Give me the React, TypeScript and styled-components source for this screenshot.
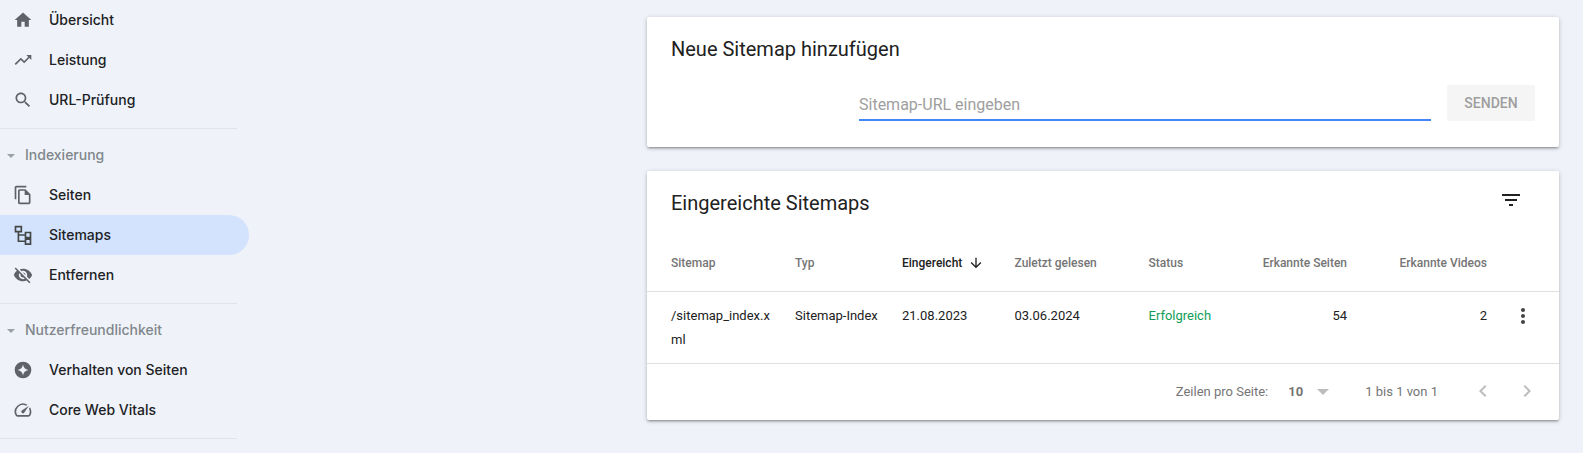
import React from "react";
import styled, { createGlobalStyle } from "styled-components";

const Global = createGlobalStyle`
  html, body { margin: 0; padding: 0; background: #eff3f9; overflow: hidden; }
  body { font-family: Roboto, "Liberation Sans", sans-serif; }
  * { box-sizing: border-box; }
`;
const Page = styled.div`
  display: flex;
  width: 1583px;
  height: 453px;
  overflow: hidden;
  background: #eff3f9;
`;
const Sidebar = styled.nav`
  flex: 0 0 647px;
  display: flex;
  flex-direction: column;
  padding-right: 398px;
`;
const NavItem = styled.div<{ $active?: boolean }>`
  display: flex;
  align-items: center;
  flex: 0 0 40px;
  padding-left: 13px;
  gap: 16px;
  border-radius: 0 20px 20px 0;
  background: ${(p) => (p.$active ? "#d3e3fd" : "transparent")};
  font: 500 14px/20px Inter, Roboto, sans-serif;
  color: #202124;
`;
const NavIcon = styled.svg<{ $outline?: boolean }>`
  width: 20px;
  height: 20px;
  fill: ${(p) => (p.$outline ? "none" : "#5f6368")};
  stroke: ${(p) => (p.$outline ? "#444746" : "none")};
  stroke-width: ${(p) => (p.$outline ? 2 : 0)};
  fill-rule: evenodd;
  flex: none;
`;
const Rule = styled.div`
  height: 1px;
  flex: none;
  width: 237px;
  background: #e0e3e8;
`;
const Block = styled.div`
  display: flex;
  flex-direction: column;
  padding-bottom: 8px;
`;
const GroupHeader = styled.div`
  display: flex;
  align-items: center;
  height: 40px;
  margin-top: 6px;
  padding-left: 7px;
  gap: 10px;
  font: 500 14px/20px Inter, Roboto, sans-serif;
  color: #80868b;
`;
const Caret = styled.span`
  width: 0;
  height: 0;
  border-left: 4px solid transparent;
  border-right: 4px solid transparent;
  border-top: 4px solid #9aa0a6;
  margin-top: 1px;
`;
const Main = styled.main`
  flex: 0 0 912px;
  display: flex;
  flex-direction: column;
  gap: 24px;
  padding-top: 17px;
`;
const Card = styled.section`
  background: #fff;
  border-radius: 2px;
  box-shadow: 0 2px 2px 0 rgba(0,0,0,.14), 0 3px 1px -2px rgba(0,0,0,.12), 0 1px 5px 0 rgba(0,0,0,.2);
`;
const AddCard = styled(Card)`
  height: 130px;
  padding: 20px 24px 0;
`;
const CardTitle = styled.h2`
  margin: 0;
  font: 400 20px/24px Roboto, sans-serif;
  color: #212121;
`;
const AddRow = styled.div`
  display: flex;
  align-items: center;
  padding-left: 188px;
  margin-top: 24px;
  gap: 16px;
`;
const UrlInput = styled.div`
  flex: 1;
  height: 36px;
  border-bottom: 2px solid #4285f4;
  font: 400 16px/40px Roboto, sans-serif;
  color: #9e9e9e;
  margin-top: -1px;
`;
const SendButton = styled.button`
  width: 88px;
  height: 36px;
  border: 0;
  border-radius: 2px;
  background: #f5f5f5;
  color: #9e9e9e;
  font: 500 14px/36px Roboto, sans-serif;
  padding: 0;
`;
const ListCard = styled(Card)`
  height: 249px;
  display: flex;
  flex-direction: column;
`;
const ListHead = styled.div`
  flex: 0 0 64px;
  display: flex;
  align-items: center;
  justify-content: space-between;
  padding: 0 36px 0 24px;
`;
const FilterIcon = styled.svg`
  width: 24px;
  height: 24px;
  fill: #212121;
  margin-top: -6px;
`;
const Table = styled.table`
  width: 100%;
  table-layout: fixed;
  border-collapse: separate;
  border-spacing: 0;
`;
const Th = styled.th<{ $right?: boolean; $sorted?: boolean }>`
  height: 57px;
  padding: 0 24px 1px 0;
  text-align: ${(p) => (p.$right ? "right" : "left")};
  font: 500 12px/16px Roboto, sans-serif;
  color: ${(p) => (p.$sorted ? "#212121" : "#757575")};
  white-space: nowrap;
  border-bottom: 1px solid #e0e0e0;
  &:first-child { padding-left: 24px; }
`;
const Td = styled.td<{ $right?: boolean; $ok?: boolean }>`
  height: 72px;
  padding: 12px 24px 0 0;
  vertical-align: top;
  text-align: ${(p) => (p.$right ? "right" : "left")};
  font: 400 13px/24px Roboto, sans-serif;
  color: ${(p) => (p.$ok ? "#0f9d58" : "#212121")};
  word-break: break-all;
  border-bottom: 1px solid #e0e0e0;
  &:first-child { padding-left: 24px; }
`;
const ActionTd = styled(Td)`
  padding: 12px 0 0 0;
  text-align: left;
  line-height: 0;
`;
const SortArrow = styled.svg`
  width: 16px;
  height: 16px;
  fill: #212121;
  vertical-align: top;
  margin-left: 6px;
`;
const Kebab = styled.svg`
  width: 24px;
  height: 24px;
  fill: #424242;
`;
const Footer = styled.div`
  flex: 1;
  display: flex;
  align-items: center;
  justify-content: flex-end;
  font: 400 13px/20px Roboto, sans-serif;
  color: #757575;
`;
const PageSize = styled.span`
  margin-left: 20px;
  font-weight: 700;
  color: #757575;
`;
const PageCaret = styled.span`
  width: 0;
  height: 0;
  margin-left: 14px;
  border-left: 6px solid transparent;
  border-right: 6px solid transparent;
  border-top: 6px solid #bdbdbd;
`;
const Range = styled.span`
  margin-left: 36px;
  margin-right: 33px;
`;
const PageNav = styled.svg`
  width: 24px;
  height: 24px;
  fill: #bdbdbd;
  margin-right: 20px;
  margin-top: -3px;
`;

const P = {
  home: "M10 20v-6h4v6h5v-8h3L12 3 2 12h3v8z",
  trend: "M16 6l2.29 2.29-4.88 4.88-4-4L2 16.59 3.41 18l6-6 4 4 6.3-6.29L22 12V6z",
  search: "M15.5 14h-.79l-.28-.27C15.41 12.59 16 11.11 16 9.5 16 5.91 13.09 3 9.5 3S3 5.91 3 9.5 5.91 16 9.5 16c1.61 0 3.09-.59 4.23-1.57l.27.28v.79l5 4.99L20.49 19l-4.99-5zm-6 0C7.01 14 5 11.99 5 9.5S7.01 5 9.5 5 14 7.01 14 9.5 11.99 14 9.5 14z",
  pages: "M16 1H4c-1.1 0-2 .9-2 2v14h2V3h12V1zm-1 4H8c-1.1 0-1.99.9-1.99 2L6 21c0 1.1.89 2 1.99 2H19c1.1 0 2-.9 2-2V11l-6-6zM8 21V7h6v5h5v9H8z",
  tree: "M3 2h7v6H3zM15 9h6v6h-6zM15 17h6v6h-6zM6.5 8v11.5H15M6.5 12H15",
  off: "M12 7c2.76 0 5 2.24 5 5 0 .65-.13 1.26-.36 1.83l2.92 2.92c1.51-1.26 2.7-2.89 3.43-4.75-1.73-4.39-6-7.5-11-7.5-1.4 0-2.74.25-3.98.7l2.16 2.16C10.74 7.13 11.35 7 12 7zM2 4.27l2.28 2.28.46.46C3.08 8.3 1.78 10.02 1 12c1.73 4.39 6 7.5 11 7.5 1.55 0 3.03-.3 4.38-.84l.42.42L19.73 22 21 20.73 3.27 3 2 4.27zM7.53 9.8l1.55 1.55c-.05.21-.08.43-.08.65 0 1.66 1.34 3 3 3 .22 0 .44-.03.65-.08l1.55 1.55c-.67.33-1.41.53-2.2.53-2.76 0-5-2.24-5-5 0-.79.2-1.53.53-2.2zm4.31-.78l3.15 3.15.02-.16c0-1.66-1.34-3-3-3l-.17.01z",
  star: "M12 2a10 10 0 1 0 0 20 10 10 0 0 0 0-20zM12 5.5c.8 4 2.5 5.7 6.5 6.5-4 .8-5.7 2.5-6.5 6.5-.8-4-2.5-5.7-6.5-6.5 4-.8 5.7-2.5 6.5-6.5z",
  speed: "M20.38 8.57l-1.23 1.85a8 8 0 0 1-.22 7.58H5.07A8 8 0 0 1 15.58 6.85l1.85-1.23A10 10 0 0 0 3.35 19a2 2 0 0 0 1.72 1h13.85a2 2 0 0 0 1.74-1 10 10 0 0 0-.27-10.44zm-9.79 6.84a2 2 0 0 0 2.83 0l5.66-8.49-8.49 5.66a2 2 0 0 0 0 2.83z",
};

const Item = ({ d, label, active, outline }: { d: string; label: string; active?: boolean; outline?: boolean }) => (
  <NavItem $active={active}>
    <NavIcon $outline={outline} viewBox="0 0 24 24"><path d={d} /></NavIcon>
    {label}
  </NavItem>
);

export default function App() {
  return (
    <Page>
      <Global />
      <Sidebar>
        <Block>
          <Item d={P.home} label="Übersicht" />
          <Item d={P.trend} label="Leistung" />
          <Item d={P.search} label="URL-Prüfung" />
        </Block>
        <Rule />
        <Block>
          <GroupHeader><Caret />Indexierung</GroupHeader>
          <Item d={P.pages} label="Seiten" />
          <Item d={P.tree} label="Sitemaps" active outline />
          <Item d={P.off} label="Entfernen" />
        </Block>
        <Rule />
        <Block>
          <GroupHeader><Caret />Nutzerfreundlichkeit</GroupHeader>
          <Item d={P.star} label="Verhalten von Seiten" />
          <Item d={P.speed} label="Core Web Vitals" />
        </Block>
        <Rule />
      </Sidebar>
      <Main>
        <AddCard>
          <CardTitle>Neue Sitemap hinzufügen</CardTitle>
          <AddRow>
            <UrlInput>Sitemap-URL eingeben</UrlInput>
            <SendButton>SENDEN</SendButton>
          </AddRow>
        </AddCard>
        <ListCard>
          <ListHead>
            <CardTitle>Eingereichte Sitemaps</CardTitle>
            <FilterIcon viewBox="0 0 24 24"><path d="M10 18h4v-2h-4v2zM3 6v2h18V6H3zm3 7h12v-2H6v2z" /></FilterIcon>
          </ListHead>
          <Table>
            <colgroup>
              <col style={{ width: 148 }} />
              <col style={{ width: 107 }} />
              <col style={{ width: 112.5 }} />
              <col style={{ width: 134 }} />
              <col style={{ width: 100.5 }} />
              <col style={{ width: 122 }} />
              <col style={{ width: 140 }} />
              <col style={{ width: 48 }} />
            </colgroup>
            <thead>
              <tr>
                <Th>Sitemap</Th>
                <Th>Typ</Th>
                <Th $sorted>
                  Eingereicht
                  <SortArrow viewBox="0 0 24 24"><path d="M20 12l-1.41-1.41L13 16.17V4h-2v12.17l-5.58-5.59L4 12l8 8 8-8z" /></SortArrow>
                </Th>
                <Th>Zuletzt gelesen</Th>
                <Th>Status</Th>
                <Th $right>Erkannte Seiten</Th>
                <Th $right>Erkannte Videos</Th>
                <Th />
              </tr>
            </thead>
            <tbody>
              <tr>
                <Td>/sitemap_index.xml</Td>
                <Td>Sitemap-Index</Td>
                <Td>21.08.2023</Td>
                <Td>03.06.2024</Td>
                <Td $ok>Erfolgreich</Td>
                <Td $right>54</Td>
                <Td $right>2</Td>
                <ActionTd>
                  <Kebab viewBox="0 0 24 24"><path d="M12 8c1.1 0 2-.9 2-2s-.9-2-2-2-2 .9-2 2 .9 2 2 2zm0 2c-1.1 0-2 .9-2 2s.9 2 2 2 2-.9 2-2-.9-2-2-2zm0 6c-1.1 0-2 .9-2 2s.9 2 2 2 2-.9 2-2-.9-2-2-2z" /></Kebab>
                </ActionTd>
              </tr>
            </tbody>
          </Table>
          <Footer>
            Zeilen pro Seite:
            <PageSize>10</PageSize>
            <PageCaret />
            <Range>1 bis 1 von 1</Range>
            <PageNav viewBox="0 0 24 24"><path d="M15.41 7.41L14 6l-6 6 6 6 1.41-1.41L10.83 12z" /></PageNav>
            <PageNav viewBox="0 0 24 24"><path d="M10 6L8.59 7.41 13.17 12l-4.58 4.59L10 18l6-6z" /></PageNav>
          </Footer>
        </ListCard>
      </Main>
    </Page>
  );
}
